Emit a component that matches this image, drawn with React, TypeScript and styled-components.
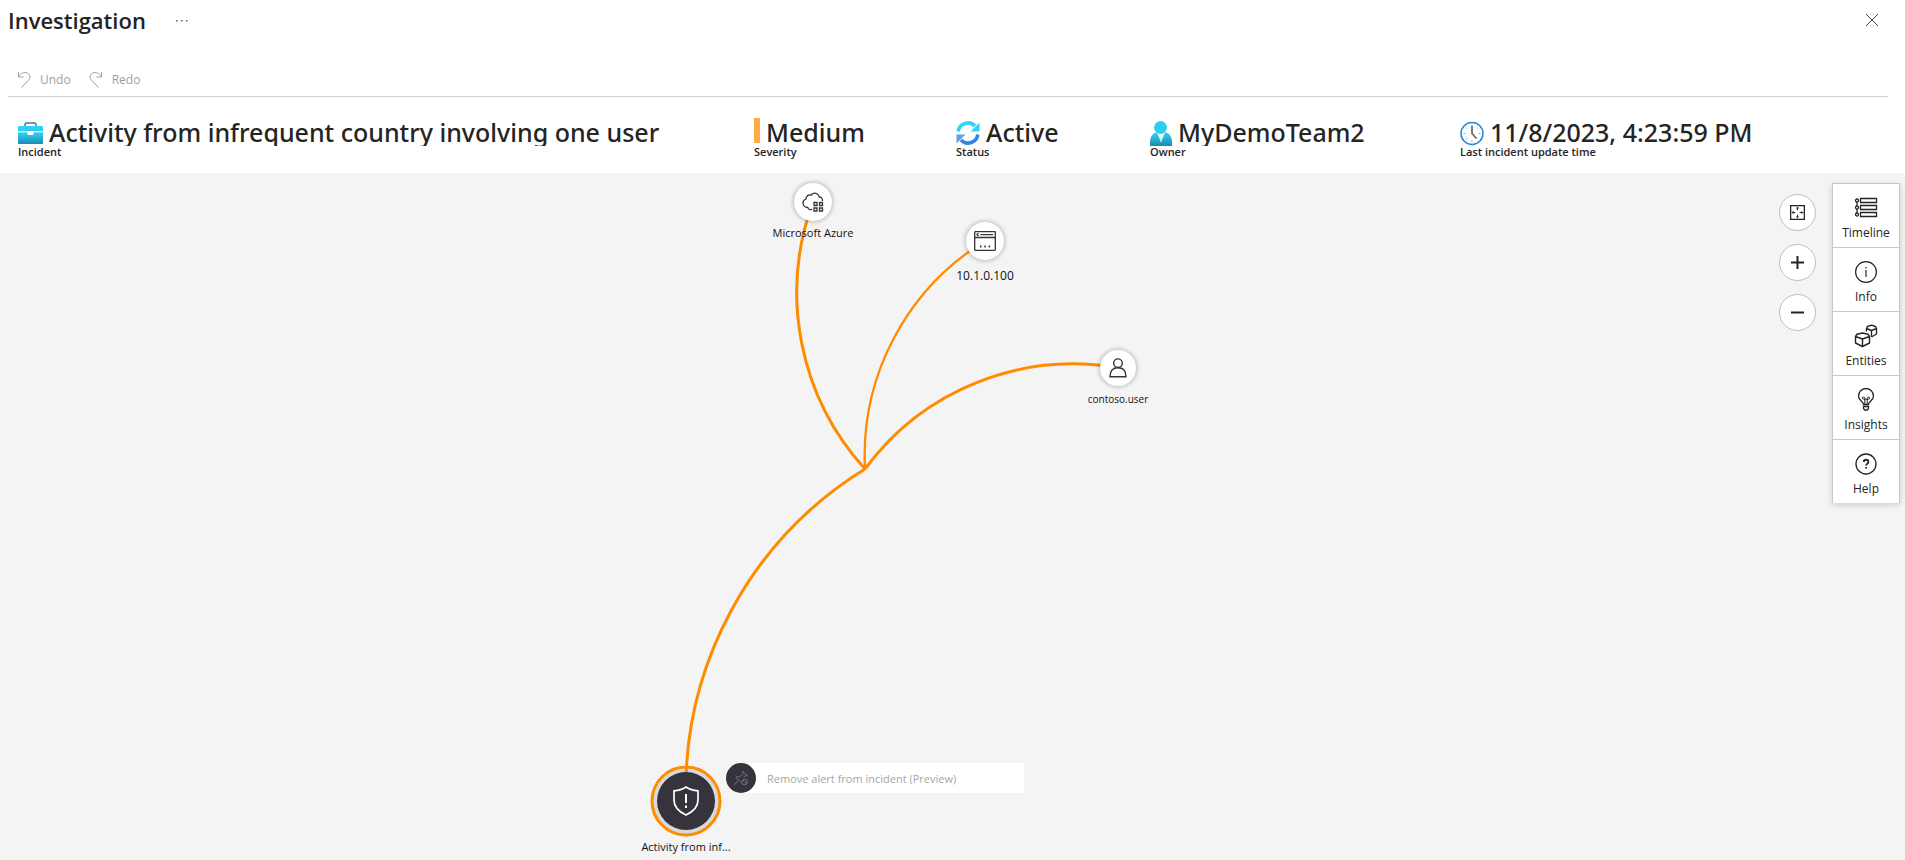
import React from "react";
import styled, { createGlobalStyle } from "styled-components";

const ORANGE = "#ff8c00";
const INK = "#252423";

const GlobalStyle = createGlobalStyle`
  * { box-sizing: border-box; }
  html, body { margin: 0; padding: 0; background: #fff; }
  body {
    font-family: "Segoe UI", "Open Sans", "Noto Sans", sans-serif;
    font-size: 12px;
    color: ${INK};
  }
  button { font: inherit; color: inherit; cursor: pointer; }
`;

const Page = styled.div`
  display: flex;
  flex-direction: column;
  min-height: 100vh;
`;

const TitleBar = styled.header`
  display: flex;
  align-items: center;
  height: 40px;
  padding: 0 17px 0 8px;
`;

const PageTitle = styled.h1`
  margin: 0 20px 0 0;
  font-size: 22px;
  line-height: 32px;
  font-weight: 600;
`;

const IconButton = styled.button`
  display: flex;
  align-items: center;
  justify-content: center;
  width: 32px;
  height: 32px;
  padding: 0;
  border: 0;
  background: transparent;
`;

const Spacer = styled.div`
  flex: 1;
`;

const Toolbar = styled.div`
  display: flex;
  align-items: center;
  gap: 17px;
  height: 36px;
  margin: 21px 17px 0 8px;
  padding: 2px 8px 0;
  border-bottom: 1px solid #d2d0ce;
`;

const ToolButton = styled.button`
  display: flex;
  align-items: center;
  gap: 8px;
  padding: 0;
  border: 0;
  background: transparent;
  line-height: 20px;
  &:disabled { color: #a19f9d; cursor: default; }
`;

const Summary = styled.dl`
  display: grid;
  grid-template-columns: 736fr 202fr 194fr 310fr 445fr;
  margin: 0;
  padding: 17px 0 15px 18px;
`;

const Fact = styled.div`
  display: flex;
  flex-direction: column-reverse;
  justify-content: flex-end;
  min-width: 0;
`;

const FactValue = styled.dd`
  display: flex;
  align-items: flex-start;
  gap: 6px;
  height: 32px;
  margin: 0;
  overflow: hidden;
  white-space: nowrap;
  font-family: "Segoe UI", "Noto Sans", "Open Sans", sans-serif;
  font-size: 25px;
  line-height: 37px;
  font-weight: 500;
  svg { flex: none; align-self: flex-end; }
`;

const FactLabel = styled.dt`
  font-size: 11px;
  line-height: 12px;
  font-weight: 600;
`;

const SeverityBar = styled.span`
  align-self: center;
  width: 6px;
  height: 25px;
  background: #ffaa44;
`;

const Canvas = styled.main`
  position: relative;
  flex: 1;
  min-height: 687px;
  overflow: hidden;
  background: #f4f4f4;
`;

const Edges = styled.svg`
  position: absolute;
  inset: 0;
  width: 100%;
  height: 100%;
`;

const Node = styled.div<{ $x: number; $y: number }>`
  position: absolute;
  left: ${(p) => p.$x}px;
  top: ${(p) => p.$y}px;
  width: 0;
  height: 0;
  display: flex;
  align-items: center;
  justify-content: center;
`;

const NodeDisc = styled.button<{ $size: number; $dark?: boolean }>`
  flex: none;
  display: flex;
  align-items: center;
  justify-content: center;
  width: ${(p) => p.$size}px;
  height: ${(p) => p.$size}px;
  padding: 0;
  border: 0;
  border-radius: 50%;
  color: ${(p) => (p.$dark ? "#fff" : "#37333d")};
  background: ${(p) => (p.$dark ? "#37333d" : "#fff")};
  box-shadow: ${(p) => (p.$dark ? "none" : "0 0 4px 1px rgba(0, 0, 0, 0.24)")};
`;

const NodeLabel = styled.span<{ $drop: number; $size: number }>`
  position: absolute;
  top: ${(p) => p.$drop}px;
  left: 0;
  transform: translateX(-50%);
  white-space: nowrap;
  font-size: ${(p) => p.$size}px;
  line-height: 16px;
  color: #111;
`;

const NodeAction = styled.button`
  position: absolute;
  left: 726px;
  top: 590px;
  display: flex;
  align-items: center;
  width: 298px;
  height: 30px;
  padding: 0;
  border: 0;
  background: linear-gradient(#fff, #fff) no-repeat 16px 0;
  font-size: 11px;
  &:disabled { color: #a6a6a6; cursor: default; }
`;

const ActionDisc = styled.span`
  display: flex;
  align-items: center;
  justify-content: center;
  width: 30px;
  height: 30px;
  margin-right: 11px;
  border-radius: 50%;
  background: #37333d;
`;

const Controls = styled.div`
  position: absolute;
  top: 10px;
  right: 5px;
  display: flex;
  align-items: flex-start;
  gap: 16px;
`;

const ZoomStack = styled.div`
  display: flex;
  flex-direction: column;
  gap: 13px;
  padding-top: 11px;
`;

const ZoomButton = styled.button`
  display: flex;
  align-items: center;
  justify-content: center;
  width: 37px;
  height: 37px;
  padding: 0;
  border: 1px solid #bebebe;
  border-radius: 50%;
  background: #fff;
`;

const SidePanel = styled.nav`
  display: flex;
  flex-direction: column;
  width: 68px;
  border: 1px solid #c8c8c8;
  border-width: 0 1px;
  background: #fff;
  box-shadow: 0 2px 6px rgba(0, 0, 0, 0.16);
`;

const PanelButton = styled.button`
  display: flex;
  flex-direction: column;
  align-items: center;
  gap: 4px;
  height: 64px;
  padding: 12px 0 0;
  border: 0;
  border-top: 1px solid #c8c8c8;
  background: #fff;
  line-height: 18px;
`;

const line = { fill: "none", stroke: "currentColor" } as const;

const UndoIcon = ({ flip }: { flip?: boolean }) => (
  <svg width="16" height="18" viewBox="0 0 16 18" {...line} aria-hidden>
    <g transform={flip ? "translate(16 0) scale(-1 1)" : undefined}>
      <path d="M2.500 1v5h5" />
      <path d="M2.500 6C4.500 2 8 .8 11 1.800c3 1.300 3.800 4.700 1.800 7L5.500 16.500" />
    </g>
  </svg>
);

const BriefcaseIcon = () => (
  <svg width="25" height="25" viewBox="0 0 25 25" aria-hidden>
    <defs>
      <linearGradient id="case" x1="0" y1="0" x2="0" y2="1">
        <stop offset="0" stopColor="#32d4f5" />
        <stop offset="0.5" stopColor="#2cc6ea" />
        <stop offset="1" stopColor="#198ab3" />
      </linearGradient>
    </defs>
    <path d="M7 6V3.500a1.500 1.500 0 0 1 1.500-1.500h8a1.500 1.500 0 0 1 1.500 1.500V6" fill="none" stroke="#4f7397" strokeWidth="1.500" />
    <rect x="0" y="5" width="25" height="18" rx="1" fill="url(#case)" />
    <rect x="0" y="10" width="25" height="1.500" fill="#c9f4fd" />
    <path d="M9.500 10h6v3a1 1 0 0 1-1 1h-4a1 1 0 0 1-1-1z" fill="#fff" />
  </svg>
);

const StatusIcon = () => (
  <svg width="24" height="25" viewBox="0 0 24 25" aria-hidden>
    <path d="M2.200 10.500A9.800 9.800 0 0 1 19 5" fill="none" stroke="#32d4f5" strokeWidth="3.600" />
    <path d="M23.500 1.500v9h-9z" fill="#32d4f5" />
    <path d="M21.800 13.500A9.800 9.800 0 0 1 5 19" fill="none" stroke="#2f86e0" strokeWidth="3.600" />
    <path d="M.5 22.500v-9h9z" fill="#5ea0ef" />
  </svg>
);

const OwnerIcon = () => (
  <svg width="22" height="25" viewBox="0 0 22 25" aria-hidden>
    <defs>
      <linearGradient id="body" x1="0" y1="0" x2="0" y2="1">
        <stop offset="0" stopColor="#32d4f5" />
        <stop offset="1" stopColor="#198ab3" />
      </linearGradient>
    </defs>
    <path d="M0 25v-4c0-5 3-9.500 6.500-9.500h9C19 11.500 22 16 22 21v4z" fill="url(#body)" />
    <path d="M7 11.500h8L11 21.500z" fill="#e3f8fd" />
    <circle cx="10.500" cy="6.500" r="6.500" fill="#30cdf0" />
  </svg>
);

const ClockIcon = () => (
  <svg width="24" height="25" viewBox="0 0 24 25" fill="none" aria-hidden>
    <circle cx="12" cy="12.500" r="11" fill="#fff" stroke="#2b88d8" strokeWidth="1.500" />
    <path d="M12 4v2M12 19v2M3.500 12.500h2M18.500 12.500h2M6 6.500l1.300 1.300M18 6.500l-1.300 1.300M6 18.500l1.300-1.300" stroke="#9cb4c8" />
    <path d="M12 5v7.500l4.500 5" stroke="#6b6b6b" strokeWidth="1.800" />
  </svg>
);

const CloudIcon = () => (
  <svg width="22" height="20" viewBox="0 0 22 20" {...line} strokeWidth="1.300" aria-hidden>
    <path d="M10 17.500C7.500 18 6 17 5.800 15.500 3 15.500 1 13.500 1 11c0-2 1.200-3.400 3-4C4 4 6.500 2.300 9 3.200 10.200 1.200 13 .5 15 1.800c1.500.9 2 2 2.200 3.200C19.500 5 20.800 6.500 20.500 9" />
    <path d="M12 10.500h3v3h-3zM17.500 10.500h3v3h-3zM12 16h3v3h-3zM17.500 16h3v3h-3z" />
  </svg>
);

const IpIcon = () => (
  <svg width="22" height="20" viewBox="0 0 22 20" {...line} strokeWidth="1.300" aria-hidden>
    <rect x="0.700" y="0.700" width="20.600" height="18.600" rx="0.500" />
    <path d="M.7 6.500h20.600M6.500 3.600H19M4.500 2.200 3 3.600 4.500 5" />
    <path d="M6 15.500h1.500M10.300 15.500h1.500M14.600 15.500h1.500" strokeWidth="1.800" />
  </svg>
);

const UserIcon = () => (
  <svg width="18" height="20" viewBox="0 0 18 20" {...line} strokeWidth="1.400" aria-hidden>
    <circle cx="9" cy="5.200" r="4.300" />
    <path d="M1 18.800C1 13 4 9.800 9 9.800s8 3.200 8 9z" />
  </svg>
);

const ShieldIcon = () => (
  <svg width="26" height="30" viewBox="0 0 26 30" {...line} strokeWidth="1.700" aria-hidden>
    <path d="M13 1C9.500 3.500 5.500 4.600 1 4.800V14c0 7 4.500 11.500 12 15 7.500-3.500 12-8 12-15V4.800C20.500 4.600 16.500 3.500 13 1z" />
    <path d="M13 8v9M13 19.500V22" strokeWidth="2" />
  </svg>
);

const PinIcon = () => (
  <svg width="16" height="16" viewBox="0 0 16 16" {...line} stroke="#77747c" aria-hidden>
    <path d="M1 15l4.500-4.500M2.500 7l5 5M3 7.200c1.500-.7 2.500-.6 3.600-.2L10 3.500 9.600 1l5 5-2.300-.3-1.800 1.800" />
    <circle cx="11.500" cy="12" r="2.800" />
    <path d="M9.600 10l3.900 4" />
  </svg>
);

const FitIcon = () => (
  <svg width="15" height="15" viewBox="0 0 14 14" {...line} aria-hidden>
    <rect x="0.600" y="0.600" width="12.800" height="12.800" strokeWidth="1.200" />
    <path d="M7 5V2M5.800 3.200 7 2l1.200 1.200M7 9v3M5.800 10.800 7 12l1.200-1.200M5 7H2M3.200 5.800 2 7l1.200 1.200M9 7h3M10.800 5.800 12 7l-1.200 1.200" strokeWidth="0.900" />
  </svg>
);

const PlusIcon = ({ minus }: { minus?: boolean }) => (
  <svg width="15" height="15" viewBox="0 0 15 15" {...line} strokeWidth="2" aria-hidden>
    <path d={minus ? "M1 7.500h13" : "M1 7.500h13M7.500 1v13"} />
  </svg>
);

const TimelineIcon = () => (
  <svg width="24" height="24" viewBox="0 0 24 24" {...line} strokeWidth="1.300" aria-hidden>
    <path d="M6.500 2.500h16v4h-16zM6.500 9.500h16v4h-16zM6.500 16.500h16v4h-16zM3 6v4M3 13v4" />
    <circle cx="3" cy="4.500" r="1.500" />
    <circle cx="3" cy="11.500" r="1.500" />
    <circle cx="3" cy="18.500" r="1.500" />
  </svg>
);

const InfoIcon = () => (
  <svg width="24" height="24" viewBox="0 0 24 24" {...line} strokeWidth="1.200" aria-hidden>
    <circle cx="12" cy="12" r="10.400" />
    <path d="M12 10v7M12 7v1.500" />
  </svg>
);

const EntitiesIcon = () => (
  <svg width="24" height="24" viewBox="0 0 24 24" {...line} strokeWidth="1.400" strokeLinejoin="round" aria-hidden>
    <path d="M8.500 9 14 10.200l1.500 2.300V19l-7 3.500-7-3.500v-6.500L3 10.200zM1.500 12.500l7 2.500 7-2.500M8.500 15v7.500" />
    <path d="M12.500 7.500V4.500L13.500 2.500 17.500 1.200l4 1.300 1 2v5.500L17.500 13M12.500 4.500l5 2 5-2M17.500 6.500V13" />
  </svg>
);

const BulbIcon = () => (
  <svg width="24" height="24" viewBox="0 0 24 24" {...line} strokeWidth="1.300" aria-hidden>
    <path d="M9.500 16.500c0-3-5-4-5-8.500a7.500 7.500 0 0 1 15 0c0 4.500-5 5.500-5 8.500zM9.500 18.500h5v2l-1.300 1.500h-2.400l-1.300-1.500z" />
    <path d="M10.800 16v-5.500c0-1-.6-1.500-1.300-1.500s-1.200.5-1.200 1.100.5 1.100 1.200 1.100h5c.7 0 1.200-.5 1.200-1.100S15.200 9 14.500 9s-1.300.5-1.300 1.500V16" strokeWidth="1" />
  </svg>
);

const HelpIcon = () => (
  <svg width="24" height="24" viewBox="0 0 24 24" {...line} strokeWidth="1.300" aria-hidden>
    <circle cx="12" cy="12" r="10" />
    <path d="M9.800 10c0-3 4.600-3 4.600 0 0 1.800-2.300 1.700-2.300 3.500M12.100 15v1.600" strokeWidth="1.800" />
  </svg>
);

const facts = [
  { label: "Incident", value: "Activity from infrequent country involving one user", icon: <BriefcaseIcon /> },
  { label: "Severity", value: "Medium", icon: <SeverityBar /> },
  { label: "Status", value: "Active", icon: <StatusIcon /> },
  { label: "Owner", value: "MyDemoTeam2", icon: <OwnerIcon /> },
  { label: "Last incident update time", value: "11/8/2023, 4:23:59 PM", icon: <ClockIcon /> },
];

const entities = [
  { name: "Microsoft Azure", x: 813, y: 29, size: 38, drop: 23, text: 11, icon: <CloudIcon /> },
  { name: "10.1.0.100", x: 985, y: 68, size: 38, drop: 27, text: 12, icon: <IpIcon /> },
  { name: "contoso.user", x: 1118, y: 195, size: 36, drop: 23, text: 10, icon: <UserIcon /> },
];

const panels = [
  { name: "Timeline", icon: <TimelineIcon /> },
  { name: "Info", icon: <InfoIcon /> },
  { name: "Entities", icon: <EntitiesIcon /> },
  { name: "Insights", icon: <BulbIcon /> },
  { name: "Help", icon: <HelpIcon /> },
];

export default function App() {
  return (
    <Page>
      <GlobalStyle />
      <TitleBar>
        <PageTitle>Investigation</PageTitle>
        <IconButton aria-label="More">
          <svg width="13" height="3" viewBox="0 0 13 3" fill="#605e5c" aria-hidden>
            <path d="M1 1h1.500v1.500H1zM6 1h1.500v1.500H6zM11 1h1.500v1.500H11z" />
          </svg>
        </IconButton>
        <Spacer />
        <IconButton aria-label="Close">
          <svg width="14" height="14" viewBox="0 0 14 14" fill="none" stroke="#484644" aria-hidden>
            <path d="M1 1l12 12M13 1 1 13" />
          </svg>
        </IconButton>
      </TitleBar>
      <Toolbar>
        <ToolButton disabled><UndoIcon />Undo</ToolButton>
        <ToolButton disabled><UndoIcon flip />Redo</ToolButton>
      </Toolbar>
      <Summary>
        {facts.map((f) => (
          <Fact key={f.label}>
            <FactLabel>{f.label}</FactLabel>
            <FactValue>{f.icon}{f.value}</FactValue>
          </Fact>
        ))}
      </Summary>
      <Canvas>
        <Edges fill="none" stroke={ORANGE} strokeWidth="3" aria-hidden>
          <circle cx="686" cy="628" r="34" fill="#d9d9d9" />
          <path d="M686 628A377 377 0 0 1 865 296" />
          <path d="M813 29A262 262 0 0 0 865 296" />
          <path d="M985 68A252 252 0 0 0 865 296" strokeWidth="2.300" />
          <path d="M1118 195A258 258 0 0 0 865 296" />
        </Edges>
        {entities.map((e) => (
          <Node key={e.name} $x={e.x} $y={e.y}>
            <NodeDisc $size={e.size} aria-label={e.name}>{e.icon}</NodeDisc>
            <NodeLabel $drop={e.drop} $size={e.text}>{e.name}</NodeLabel>
          </Node>
        ))}
        <Node $x={686} $y={628}>
          <NodeDisc $size={58} $dark aria-label="Alert"><ShieldIcon /></NodeDisc>
          <NodeLabel $drop={38} $size={11}>Activity from inf...</NodeLabel>
        </Node>
        <NodeAction disabled>
          <ActionDisc><PinIcon /></ActionDisc>
          Remove alert from incident (Preview)
        </NodeAction>
        <Controls>
          <ZoomStack>
            <ZoomButton aria-label="Fit to screen"><FitIcon /></ZoomButton>
            <ZoomButton aria-label="Zoom in"><PlusIcon /></ZoomButton>
            <ZoomButton aria-label="Zoom out"><PlusIcon minus /></ZoomButton>
          </ZoomStack>
          <SidePanel aria-label="Panels">
            {panels.map((p) => (
              <PanelButton key={p.name}>{p.icon}{p.name}</PanelButton>
            ))}
          </SidePanel>
        </Controls>
      </Canvas>
    </Page>
  );
}
